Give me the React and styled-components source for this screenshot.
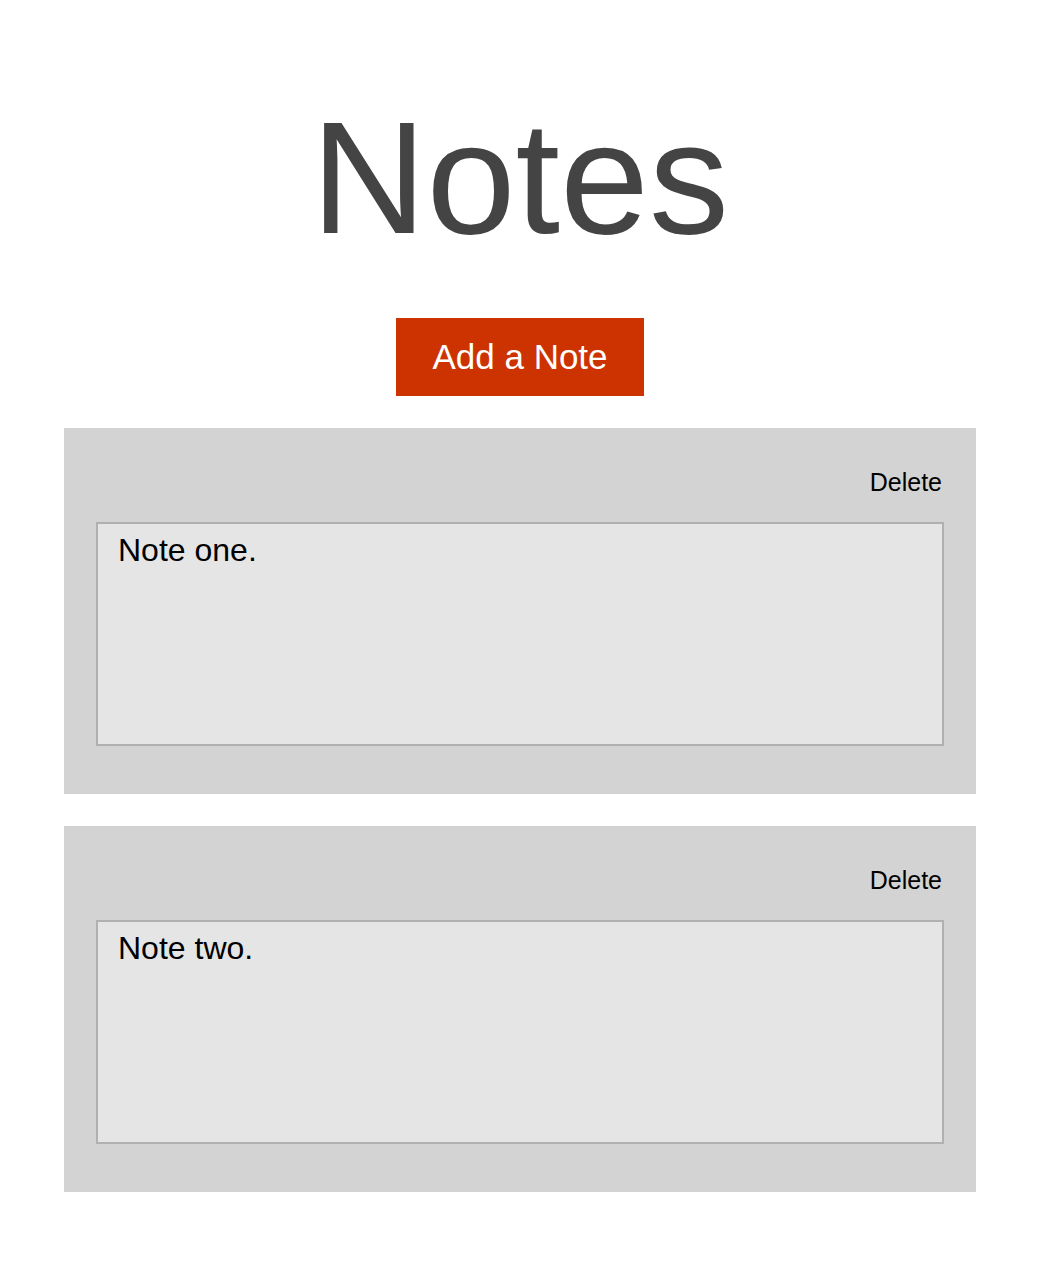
import React, { useState } from "react";
import styled, { createGlobalStyle } from "styled-components";

const GlobalStyle = createGlobalStyle`
  html, body {
    margin: 0;
    padding: 0;
    background: #ffffff;
  }
  body {
    padding-left: 2px;
    font-family: "Liberation Sans", Arial, Helvetica, sans-serif;
  }
  * { box-sizing: border-box; }
`;

const Page = styled.main`
  width: 912px;
  margin: 0 auto;
  padding-top: 98px;
  padding-bottom: 92px;
  display: flex;
  flex-direction: column;
  align-items: center;
`;

const Title = styled.h1`
  margin: 0;
  font-family: "Liberation Sans", Arial, Helvetica, sans-serif;
  font-weight: 400;
  font-size: 160px;
  line-height: 160px;
  color: #444444;
`;

const AddButton = styled.button`
  margin-top: 60px;
  height: 78px;
  width: 248px;
  border: none;
  border-radius: 0;
  background: #cc3300;
  color: #ffffff;
  font-family: "Liberation Sans", Arial, Helvetica, sans-serif;
  font-size: 35px;
  display: flex;
  align-items: center;
  justify-content: center;
  padding: 0;
  cursor: pointer;
`;

const NoteList = styled.section`
  margin-top: 32px;
  width: 100%;
  display: flex;
  flex-direction: column;
  gap: 32px;
`;

const Card = styled.article`
  background: #d3d3d3;
  padding: 42px 32px 48px;
  display: flex;
  flex-direction: column;
`;

const CardHeader = styled.div`
  display: flex;
  justify-content: flex-end;
  margin-bottom: 28px;
`;

const DeleteButton = styled.button`
  background: none;
  border: none;
  padding: 0;
  margin-right: 2px;
  font-family: "Liberation Sans", Arial, Helvetica, sans-serif;
  font-size: 25px;
  line-height: 24px;
  color: #000000;
  cursor: pointer;
`;

const NoteText = styled.textarea`
  display: block;
  width: 100%;
  height: 224px;
  margin: 0;
  border: 2px solid #b0b0b0;
  background: #e5e5e5;
  padding: 8px 20px;
  font-family: "Liberation Sans", Arial, Helvetica, sans-serif;
  font-size: 32px;
  line-height: normal;
  color: #000000;
  resize: none;
  outline: none;
`;

export default function App() {
  const [notes, setNotes] = useState([
    { id: 1, text: "Note one." },
    { id: 2, text: "Note two." },
  ]);

  const add = () =>
    setNotes((n) => [...n, { id: Date.now(), text: "" }]);
  const remove = (id) => setNotes((n) => n.filter((x) => x.id !== id));
  const update = (id, text) =>
    setNotes((n) => n.map((x) => (x.id === id ? { ...x, text } : x)));

  return (
    <>
      <GlobalStyle />
      <Page>
        <Title>Notes</Title>
        <AddButton onClick={add}>Add a Note</AddButton>
        <NoteList>
          {notes.map((note) => (
            <Card key={note.id}>
              <CardHeader>
                <DeleteButton onClick={() => remove(note.id)}>Delete</DeleteButton>
              </CardHeader>
              <NoteText
                value={note.text}
                onChange={(e) => update(note.id, e.target.value)}
              />
            </Card>
          ))}
        </NoteList>
      </Page>
    </>
  );
}
